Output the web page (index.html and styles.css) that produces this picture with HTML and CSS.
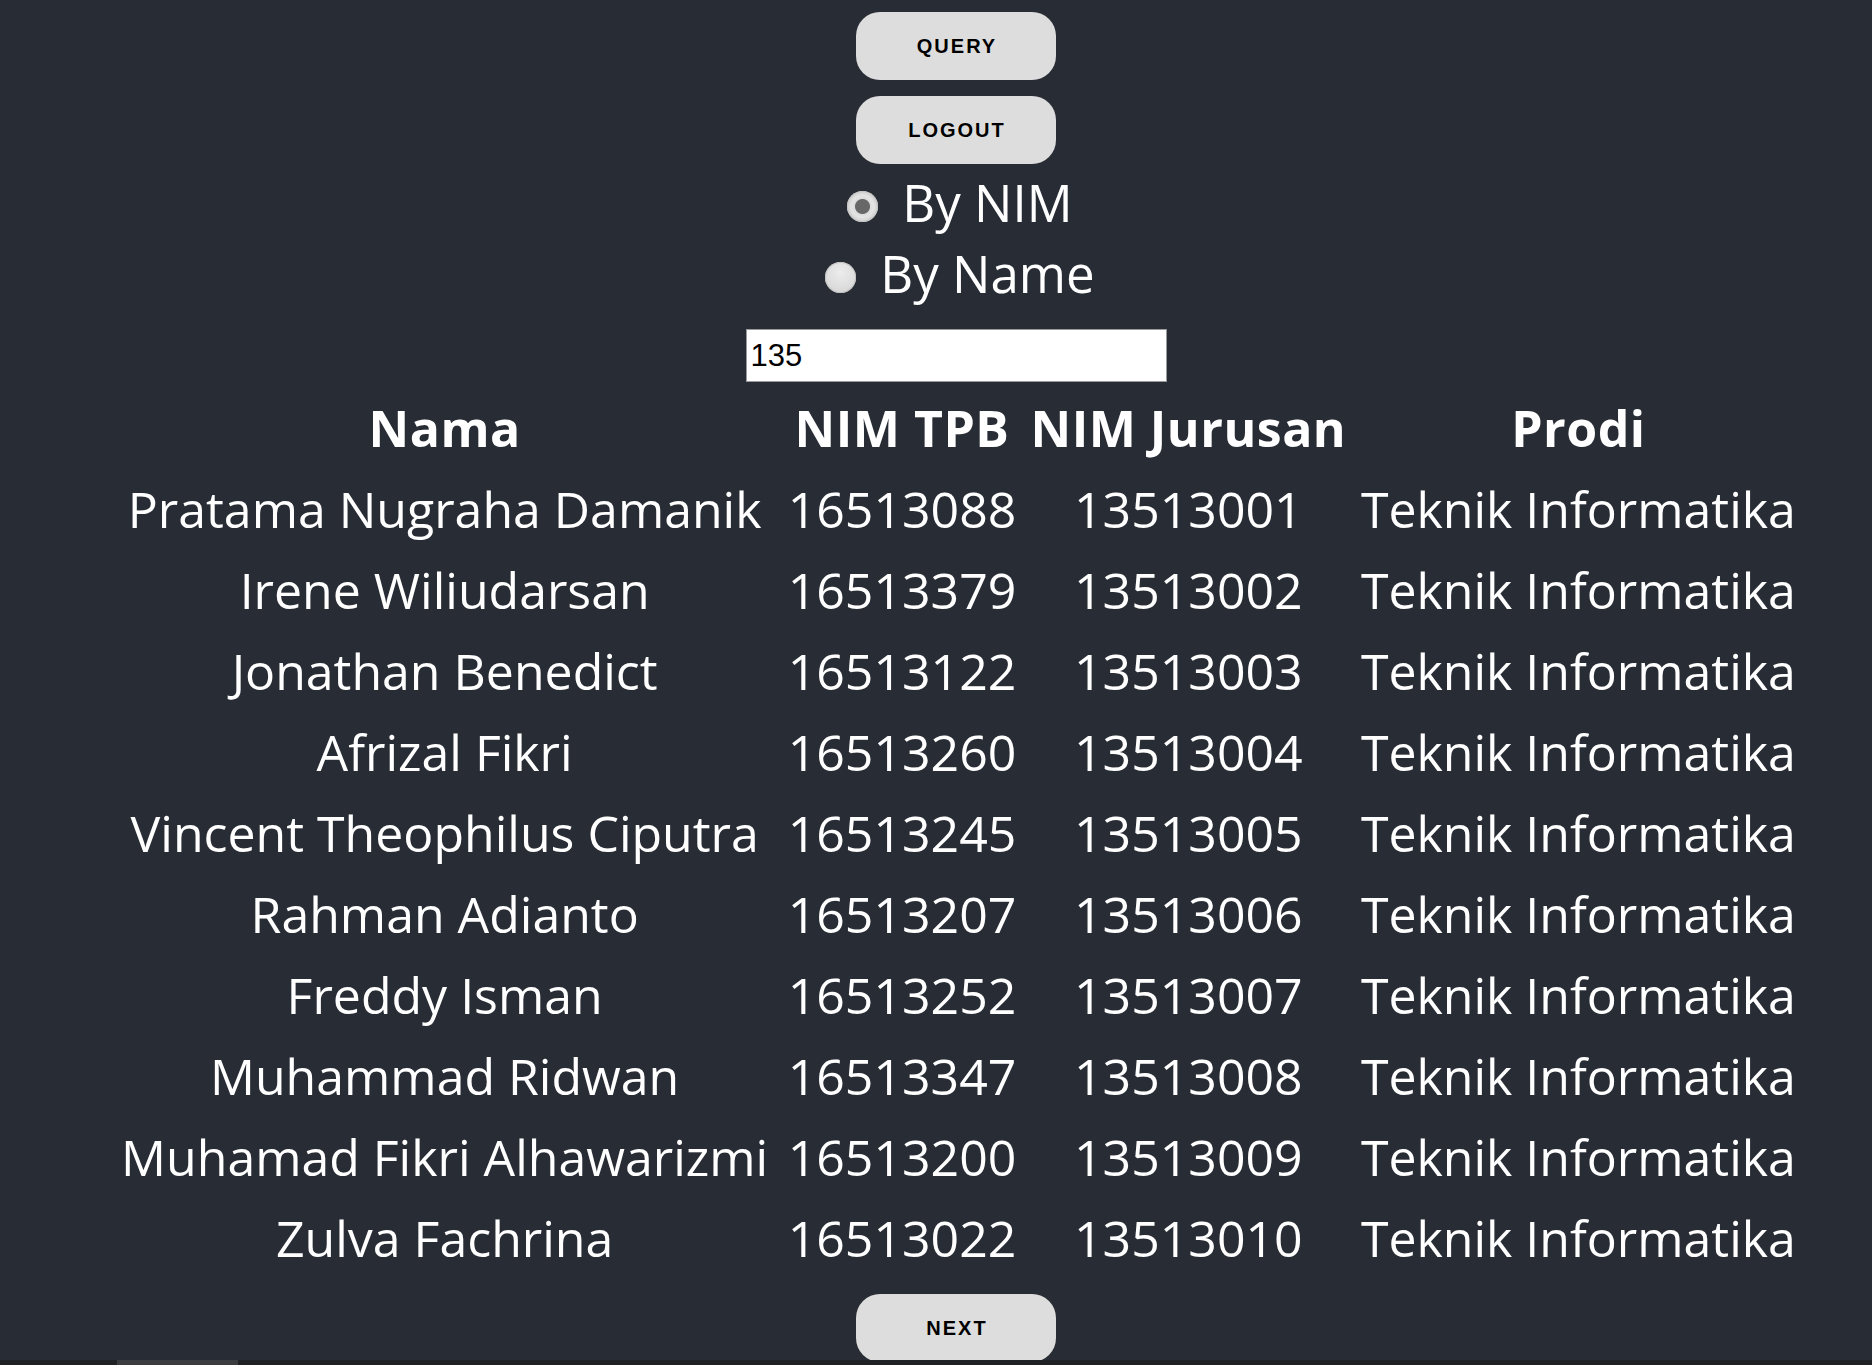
FILE: index.html
```html
<!DOCTYPE html>
<html lang="id">
<head>
<meta charset="utf-8">
<title>NIM Finder</title>
<link rel="stylesheet" href="styles.css">
</head>
<body>
<main class="app">
  <button class="btn btn-query" type="button">QUERY</button>
  <button class="btn btn-logout" type="button">LOGOUT</button>
  <label class="opt opt-first"><input class="radio" type="radio" name="mode" checked><span>By NIM</span></label>
  <label class="opt"><input class="radio" type="radio" name="mode"><span>By Name</span></label>
  <input class="search" type="text" value="135">
  <table class="result">
    <thead>
      <tr><th class="c-nama">Nama</th><th class="c-tpb">NIM TPB</th><th class="c-jur">NIM Jurusan</th><th class="c-prodi">Prodi</th></tr>
    </thead>
    <tbody>
      <tr><td>Pratama Nugraha Damanik</td><td>16513088</td><td>13513001</td><td>Teknik Informatika</td></tr>
      <tr><td>Irene Wiliudarsan</td><td>16513379</td><td>13513002</td><td>Teknik Informatika</td></tr>
      <tr><td>Jonathan Benedict</td><td>16513122</td><td>13513003</td><td>Teknik Informatika</td></tr>
      <tr><td>Afrizal Fikri</td><td>16513260</td><td>13513004</td><td>Teknik Informatika</td></tr>
      <tr><td>Vincent Theophilus Ciputra</td><td>16513245</td><td>13513005</td><td>Teknik Informatika</td></tr>
      <tr><td>Rahman Adianto</td><td>16513207</td><td>13513006</td><td>Teknik Informatika</td></tr>
      <tr><td>Freddy Isman</td><td>16513252</td><td>13513007</td><td>Teknik Informatika</td></tr>
      <tr><td>Muhammad Ridwan</td><td>16513347</td><td>13513008</td><td>Teknik Informatika</td></tr>
      <tr><td>Muhamad Fikri Alhawarizmi</td><td>16513200</td><td>13513009</td><td>Teknik Informatika</td></tr>
      <tr><td>Zulva Fachrina</td><td>16513022</td><td>13513010</td><td>Teknik Informatika</td></tr>
    </tbody>
  </table>
  <button class="btn btn-next" type="button">NEXT</button>
</main>
<div class="hscroll"><div class="hscroll-thumb"></div></div>
</body>
</html>
```
FILE: styles.css
```css
html, body {
  margin: 0;
  padding: 0;
  height: 100%;
  overflow: hidden;
  background: #282c34;
}

body {
  font-family: "Open Sans", "Noto Sans", sans-serif;
  color: #ffffff;
}

.app {
  display: flex;
  flex-direction: column;
  align-items: center;
  padding: 12px 0 0 40px;
}

.btn {
  width: 200px;
  height: 68px;
  border: none;
  border-radius: 24px;
  background: #dddddd;
  color: #000000;
  font-family: "Liberation Sans", Arial, sans-serif;
  font-weight: bold;
  font-size: 20px;
  letter-spacing: 2px;
  padding: 0 0 0 2px;
  margin: 0;
  cursor: pointer;
}

.btn-logout {
  margin-top: 16px;
}

.btn-next {
  margin-top: 14px;
}

.opt {
  display: flex;
  align-items: center;
  gap: 24px;
  height: 71px;
  margin-left: 8px;
  font-size: 51px;
  line-height: 71px;
  color: #ffffff;
}

.opt-first {
  margin-top: 3px;
}

.radio {
  -webkit-appearance: none;
  appearance: none;
  width: 31px;
  height: 31px;
  margin: 7px 0 0 0;
  border-radius: 50%;
  border: none;
  background: radial-gradient(circle at 50% 35%, #ececec 0%, #dedede 55%, #cfcfcf 100%);
  box-shadow: inset 0 0 0 1px #c4c4c4;
  flex: none;
}

.radio:checked {
  background: radial-gradient(circle at 50% 50%, #686868 0, #686868 7px, #dcdcdc 8px, #e4e4e4 11px, #cdcdcd 15.5px);
}

.search {
  box-sizing: border-box;
  width: 421px;
  height: 53px;
  margin-top: 20px;
  padding: 0 4px;
  border: 1px solid #9a9a9a;
  background: #ffffff;
  color: #000000;
  font-family: "Liberation Sans", Arial, sans-serif;
  font-size: 31px;
  outline: none;
}

.result {
  margin-top: 5px;
  border-collapse: separate;
  border-spacing: 2px;
  font-size: 50px;
  line-height: 79px;
}

.result th,
.result td {
  padding: 0 6px;
  text-align: center;
  white-space: nowrap;
}

.result th {
  font-weight: bold;
  letter-spacing: 0.5px;
}

.c-nama { width: 658px; }
.c-tpb { width: 226px; }
.c-jur { width: 316px; }
.c-prodi { width: 436px; }

.hscroll {
  position: fixed;
  left: 0;
  right: 0;
  bottom: 0;
  height: 5px;
  background: #1f2125;
}

.hscroll-thumb {
  margin-left: 117px;
  width: 121px;
  height: 100%;
  background: #3b3c3f;
}
```
